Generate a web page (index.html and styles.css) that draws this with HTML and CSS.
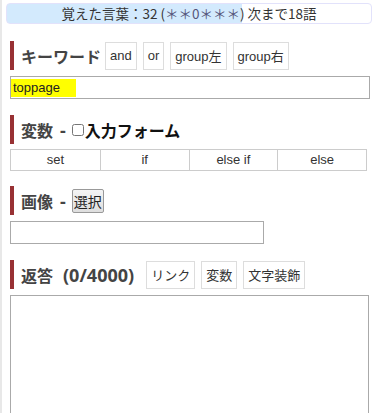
FILE: index.html
```html
<!DOCTYPE html>
<html lang="ja">
<head>
<meta charset="utf-8">
<link rel="stylesheet" href="styles.css">
</head>
<body>
<div class="page">
  <div class="progress">覚えた言葉：32 (<span class="stars">＊＊0＊＊＊</span>) 次まで18語</div>

  <section class="sec sec-keyword">
    <div class="head">
      <h2 class="title">キーワード</h2>
      <span class="tbtn">and</span>
      <span class="tbtn">or</span>
      <span class="tbtn">group左</span>
      <span class="tbtn">group右</span>
    </div>
    <div class="field full"><span class="hl">toppage</span></div>
  </section>

  <section class="sec sec-var">
    <div class="head">
      <h2 class="title">変数<span class="dash">-</span><input type="checkbox" class="chk"><span class="dark">入力フォーム</span></h2>
    </div>
    <div class="cells">
      <div class="cell">set</div>
      <div class="cell">if</div>
      <div class="cell">else if</div>
      <div class="cell">else</div>
    </div>
  </section>

  <section class="sec sec-img">
    <div class="head">
      <h2 class="title">画像<span class="dash">-</span><button class="pick">選択</button></h2>
    </div>
    <div class="field short"></div>
  </section>

  <section class="sec sec-reply">
    <div class="head">
      <h2 class="title title-reply">返答<span class="lat">(0/4000)</span></h2>
      <span class="tbtn">リンク</span>
      <span class="tbtn">変数</span>
      <span class="tbtn">文字装飾</span>
    </div>
    <div class="area"></div>
  </section>
</div>
</body>
</html>
```

FILE: styles.css
```css
html, body {
  margin: 0;
  padding: 0;
  background: #fff;
}
body {
  font-family: "Liberation Sans", "Noto Sans CJK JP", sans-serif;
  color: #333;
  overflow: hidden;
}
.page {
  border-left: 2px solid #e8e8e8;
  min-height: 413px;
  padding: 3px 3px 0 8px;
  box-sizing: border-box;
}
.progress {
  margin-left: -4px;
  height: 21px;
  box-sizing: border-box;
  border: 1px solid #e2e2fb;
  border-radius: 4px;
  background: linear-gradient(to right, #d3eafd 64.5%, #fff 64.5%);
  font-size: 13.5px;
  line-height: 19px;
  text-align: center;
  color: #333;
  font-family: "Noto Sans CJK JP", sans-serif;
}
.stars {
  color: #55557a;
}
.sec {
  margin-top: 17px;
}
.sec-var { margin-top: 16px; }
.sec-img { margin-top: 15px; }
.sec-reply { margin-top: 16px; }
.head {
  display: flex;
  align-items: center;
  border-left: 4px solid #983134;
  padding-left: 7px;
  min-height: 29px;
}
.title {
  margin: 0 4px 0 0;
  font-size: 16px;
  font-weight: bold;
  color: #444;
  font-family: "Noto Sans CJK JP", sans-serif;
  display: flex;
  align-items: center;
  white-space: pre;
}
.dash {
  font-family: "Open Sans", sans-serif;
  font-size: 18px;
  margin: 0 6px 0 7px;
}
.lat {
  font-family: "Open Sans", sans-serif;
  font-size: 18px;
  margin-left: 10px;
}
.title-reply {
  margin-right: 12px;
}
.dark {
  color: #111;
}
.chk {
  width: 12px;
  height: 12px;
  margin: 0 1px 0 0;
}
.tbtn {
  display: inline-flex;
  align-items: center;
  height: 28px;
  box-sizing: border-box;
  border: 1px solid #ddd;
  padding: 0 4px;
  margin-right: 6px;
  font-size: 13px;
  color: #333;
  background: #fff;
}
.field {
  margin-top: 6px;
  height: 23px;
  box-sizing: border-box;
  border: 1px solid #aaa;
  font-size: 13px;
  display: flex;
  align-items: center;
}
.full {
  width: 360px;
}
.short {
  width: 254px;
}
.hl {
  background: #ffff00;
  color: #222;
  padding: 2px 16px 2px 2px;
  line-height: 14px;
}
.cells {
  margin-top: 5px;
  width: 357px;
  display: grid;
  grid-template-columns: repeat(4, 1fr);
  border: 1px solid #ccc;
  box-sizing: border-box;
}
.cell {
  height: 20px;
  line-height: 20px;
  text-align: center;
  font-size: 13px;
  color: #333;
  border-left: 1px solid #ccc;
}
.cell:first-child {
  border-left: none;
}
.pick {
  height: 24px;
  padding: 0 1px;
  margin-left: 0;
  border: 1px solid #999;
  border-radius: 2px;
  background: linear-gradient(#f4f4f4, #dedede);
  font-family: "Noto Sans CJK JP", sans-serif;
  font-size: 14px;
  color: #222;
}
.area {
  margin-top: 6px;
  width: 359px;
  height: 140px;
  box-sizing: border-box;
  border: 1px solid #aaa;
}
```
